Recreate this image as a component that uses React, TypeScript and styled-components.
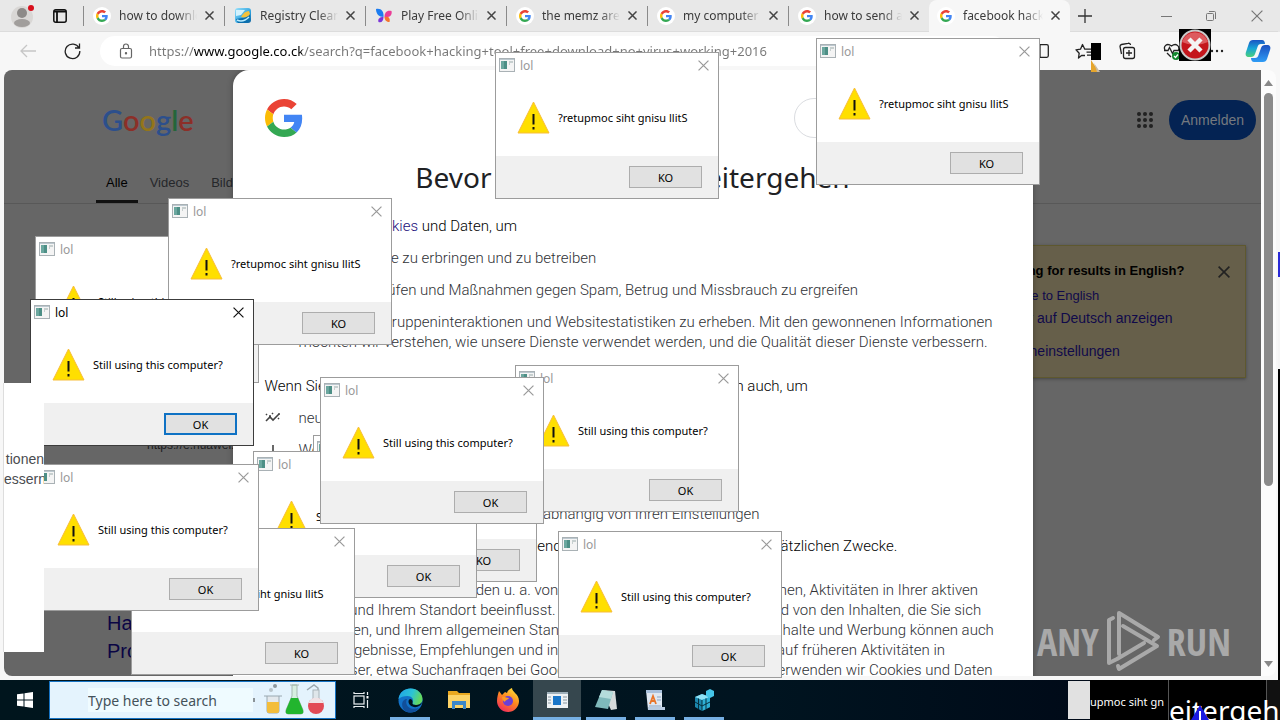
import React from "react";
import styled, { createGlobalStyle, css } from "styled-components";

const ui = `"Noto Sans", "Open Sans", sans-serif`;
const arial = `"Liberation Sans", Arial, sans-serif`;

const GlobalStyle = createGlobalStyle`
  *, *::before, *::after { box-sizing: border-box; }
  body { margin: 0; font-family: ${arial}; overflow: hidden; }
  button { border: 0; background: none; padding: 0; margin: 0; font: inherit; color: inherit; }
  a { text-decoration: none; color: inherit; }
  h1, h2, p, ul { margin: 0; padding: 0; }
  svg { display: block; flex: none; }
`;

const Desktop = styled.div`
  position: relative;
  display: flex;
  flex-direction: column;
  height: 100vh;
  overflow: hidden;
  background: #000;
`;
const Stage = styled.div`
  flex: 1;
  min-height: 0;
  display: flex;
`;
const EdgeStrip = styled.div`
  width: 2px;
  background: linear-gradient(#e8e8e8 0 32px, #f7f7f7 32px 252px, #2a2ad8 252px 277px, #f4f4f4 277px 369px, #000 369px);
`;
const Browser = styled.div`
  flex: 1;
  min-width: 0;
  display: flex;
  flex-direction: column;
  background: #f7f7f7;
`;

/* ---------- tab strip ---------- */
const TabStrip = styled.div`
  height: 32px;
  flex: none;
  display: flex;
  align-items: center;
  background: #e8e8e8;
  border-bottom: 1px solid #dcdcdc;
  font-family: ${ui};
  font-size: 12px;
  color: #3b3b3b;
`;
const ProfileArea = styled.div`
  width: 83px;
  flex: none;
  display: flex;
  align-items: center;
  gap: 17px;
  padding-left: 10px;
`;
const Tab = styled.div<{ $active?: boolean }>`
  width: 141px;
  min-width: 0;
  height: 32px;
  display: flex;
  align-items: center;
  gap: 8px;
  padding-right: 10px;
  ${(p) => p.$active ? css`
    padding-left: 8px;
    background: #f7f7f7;
    border-radius: 8px 8px 0 0;
  ` : css`
    padding-left: 10px;
    background: linear-gradient(#8a8a8a, #8a8a8a) 0 6px / 1px 20px no-repeat;
  `}
`;
const TabTitle = styled.span`
  flex: 1;
  min-width: 0;
  overflow: hidden;
  white-space: nowrap;
  line-height: 20px;
  mask-image: linear-gradient(90deg, #000 75%, transparent);
`;
const IconButton = styled.button<{ $lead?: number }>`
  display: grid;
  place-items: center;
  flex: none;
  margin-left: ${(p) => p.$lead ?? 0}px;
`;
const WindowControls = styled.div`
  margin-left: auto;
  display: flex;
  gap: 34px;
  padding-right: 15px;
`;

/* ---------- toolbar ---------- */
const Toolbar = styled.div`
  height: 38px;
  flex: none;
  display: flex;
  align-items: center;
  padding: 0 7px 0 18px;
`;
const AddressBar = styled.label`
  flex: 1;
  height: 30px;
  margin: 0 24px 0 19px;
  padding-left: 18px;
  display: flex;
  align-items: center;
  gap: 15px;
  border-radius: 15px;
  background: #fff;
`;
const AddressInput = styled.input`
  flex: 1;
  border: 0;
  padding: 0;
  outline: 0;
  font-family: ${ui};
  font-size: 13px;
  line-height: 20px;
  color: transparent;
  background: linear-gradient(90deg, #777 0 45px, #000 45px 153px, #777 153px);
  background-clip: text;
`;
const ToolbarIcons = styled.div`
  display: flex;
  align-items: center;
  gap: 20px;
`;

/* ---------- page ---------- */
const Frame = styled.div`
  flex: 1;
  min-height: 0;
  display: flex;
  margin: 0 2px 0 4px;
  padding-bottom: 4px;
`;
const Page = styled.main`
  position: relative;
  flex: 1;
  min-width: 0;
  overflow: hidden;
  border-radius: 8px 0 0 8px;
  background: #666;
  color: #1c1d1f;
`;
const ScrollBar = styled.div`
  width: 15px;
  display: flex;
  flex-direction: column;
  align-items: center;
  justify-content: space-between;
  padding: 10px 0 9px;
  background: #fcfcfc;
  border-radius: 0 8px 8px 0;
`;
const ScrollTrack = styled.div`
  flex: 1;
  margin: 7px 0;
`;
const ScrollThumb = styled.div`
  width: 9px;
  height: 70%;
  border-radius: 5px;
  background: #8b8b8b;
`;
const PageHeader = styled.header`
  display: flex;
  align-items: center;
  height: 100px;
  padding: 0 5px 0 98px;
`;
const Wordmark = styled.div`
  flex: 1;
  font-family: Lato, sans-serif;
  font-size: 29px;
  line-height: 38px;
  font-weight: 600;
`;
const Letter = styled.span<{ $c: string }>`
  color: ${(p) => p.$c};
`;
const SignIn = styled.button`
  width: 87px;
  height: 40px;
  margin-left: 16px;
  border-radius: 20px;
  background: #042353;
  color: #75797f;
  font-size: 14px;
`;
const PageTabs = styled.nav`
  display: flex;
  height: 34px;
  padding-left: 92px;
  gap: 2px;
  border-bottom: 1px solid #585858;
  font-size: 13px;
  line-height: 25px;
`;
const PageTab = styled.a<{ $on?: boolean }>`
  padding: 0 10px;
  color: ${(p) => (p.$on ? "#000" : "#25272a")};
  border-bottom: 3px solid ${(p) => (p.$on ? "#111" : "transparent")};
`;
const Columns = styled.div`
  display: flex;
  justify-content: space-between;
  padding: 41px 15px 0 103px;
`;
const Results = styled.div`
  width: 400px;
  padding-top: 190px;
`;
const ResultUrl = styled.p`
  padding-left: 40px;
  font-size: 12px;
  line-height: 20px;
`;
const ResultTitle = styled.a`
  display: block;
  margin-top: 154px;
  font-size: 20px;
  line-height: 28px;
  color: #0a0544;
`;
const LanguageCard = styled.aside`
  width: 277px;
  height: 133px;
  padding: 14px 15px 0 23px;
  display: grid;
  grid-template-columns: 1fr auto;
  align-content: start;
  background: #665f4a;
  border: 1px solid #5e582f;
  box-shadow: 0 1px 3px #444;
  font-size: 14px;
  line-height: 23px;
  color: #100a4a;
`;
const CardTitle = styled.h2`
  margin-bottom: 2px;
  font-size: 13px;
  line-height: 22px;
  color: #000;
`;
const CardLink = styled.a<{ $gap?: boolean; $small?: boolean }>`
  grid-column: 1 / -1;
  margin-top: ${(p) => (p.$gap ? 10 : 0)}px;
  font-size: ${(p) => (p.$small ? 13 : 14)}px;
`;

/* ---------- consent sheet ---------- */
const Consent = styled.section`
  position: absolute;
  inset: 0 0 auto 0;
  margin: 0 auto;
  width: 800px;
  height: 700px;
  padding: 28px 32px 0;
  border-radius: 16px 16px 0 0;
  background: #fff;
  font-family: Roboto, ${arial};
  font-size: 15px;
  font-weight: 300;
  line-height: 20px;
  color: #303236;
  white-space: nowrap;
  box-shadow: 0 0 6px rgba(0, 0, 0, 0.3);
`;
const ConsentTop = styled.div`
  display: flex;
  justify-content: space-between;
  align-items: center;
  height: 40px;
`;
const LanguageButton = styled.button`
  width: 207px;
  height: 40px;
  border: 1px solid #dadce0;
  border-radius: 20px;
`;
const ConsentTitle = styled.h1`
  margin: 20px 0;
  text-align: center;
  font-family: ${ui};
  font-size: 28px;
  line-height: 38px;
  font-weight: 400;
  color: #202124;
`;
const Lead = styled.p`
  color: #000;
`;
const Inline = styled.a`
  color: #1a0d7a;
`;
const Purposes = styled.ul<{ $tight?: boolean }>`
  list-style: none;
  margin: 12px 0 ${(p) => (p.$tight ? 12 : 24)}px;
  display: grid;
  gap: 12px;
`;
const Purpose = styled.li`
  display: grid;
  grid-template-columns: 16px 1fr;
  gap: 18px;
`;
const Fine = styled.p`
  margin-top: 24px;
`;
const Watermark = styled.div`
  position: absolute;
  right: 30px;
  bottom: 4px;
  display: flex;
  align-items: center;
  gap: 6px;
  font-family: "Liberation Sans Narrow", "Open Sans Condensed", "DejaVu Sans Condensed", sans-serif;
  font-size: 38px;
  line-height: 60px;
  color: #a9a9a9;
`;

/* ---------- message boxes ---------- */
const Box = styled.div<{ $x: number; $y: number; $active?: boolean }>`
  position: absolute;
  left: ${(p) => p.$x}px;
  top: ${(p) => p.$y}px;
  width: 224px;
  height: 147px;
  display: flex;
  flex-direction: column;
  border: 1px solid ${(p) => (p.$active ? "#3c3c3c" : "#9c9c9c")};
  background: #fff;
  font-family: ${ui};
  font-size: 11px;
  color: #000;
`;
const BoxTitle = styled.div<{ $active?: boolean }>`
  display: flex;
  align-items: center;
  gap: 5px;
  height: 24px;
  padding: 0 9px 0 3px;
  font-size: 12px;
  color: ${(p) => (p.$active ? "#000" : "#999")};
  ${IconButton} { margin-left: auto; }
`;
const BoxBody = styled.div`
  flex: 1;
  display: flex;
  align-items: center;
  gap: 8px;
  padding: 2px 0 0 21px;
  white-space: nowrap;
`;
const BoxFooter = styled.div`
  height: 42px;
  display: flex;
  justify-content: flex-end;
  padding: 10px 16px;
  background: #f0f0f0;
`;
const BoxButton = styled.button<{ $active?: boolean }>`
  width: 73px;
  height: 22px;
  background: #e1e1e1;
  border: ${(p) => (p.$active ? "2px solid #0f72c4" : "1px solid #adadad")};
`;

/* ---------- stray screen fragments ---------- */
const LeftFragment = styled.div`
  position: absolute;
  left: 3px;
  top: 383px;
  width: 41px;
  height: 269px;
  padding-top: 66px;
  overflow: hidden;
  background: #fff;
  border-left: 1px solid #ddd;
  font-size: 14px;
  line-height: 20px;
  color: #4a4c50;
  text-align: right;
`;
const StarFragment = styled.div`
  position: absolute;
  left: 1091px;
  top: 43px;
`;
const ErrorBadge = styled.div`
  position: absolute;
  left: 1179px;
  top: 29px;
`;

/* ---------- taskbar ---------- */
const Taskbar = styled.footer`
  position: relative;
  height: 40px;
  flex: none;
  display: flex;
  align-items: stretch;
  background: linear-gradient(90deg, #00151d, #001420 60%, #000a18 85%, #000);
`;
const StartButton = styled.button`
  width: 49px;
  display: grid;
  place-items: center;
`;
const SearchBox = styled.label`
  width: 287px;
  margin: 1px 0;
  padding: 0 8px 0 38px;
  display: flex;
  align-items: center;
  border: 1px solid #1673c4;
  background: #e4f3fd;
`;
const SearchInput = styled.input`
  flex: 1;
  min-width: 0;
  height: 24px;
  border: 0;
  padding: 0;
  background: #effbff;
  font-family: ${ui};
  font-size: 14px;
  &::placeholder { color: #44525a; opacity: 1; }
`;
const TaskButtons = styled.div`
  display: flex;
  gap: 1px;
  margin-left: 1px;
`;
const TaskButton = styled.button<{ $open?: boolean; $active?: boolean }>`
  width: 48px;
  display: grid;
  place-items: center;
  background: ${(p) => (p.$active ? "#36474e" : "none")};
  box-shadow: ${(p) => (p.$open ? "inset 0 -3px 0 #76b0e4" : "none")};
  border: solid transparent;
  border-width: 0 ${(p) => (p.$active ? 0 : 4)}px;
`;
const TrayFragments = styled.div`
  margin-left: auto;
  display: flex;
  font-family: ${ui};
  color: #fff;
  white-space: nowrap;
`;
const TrayBlank = styled.div`
  width: 22px;
  margin: 1px 0;
  background: #e1e1e1;
`;
const TrayText = styled.div`
  width: 79px;
  overflow: hidden;
  background: #000;
  border-right: 1px solid #555;
  font-size: 11px;
  line-height: 44px;
`;
const TrayHeading = styled.div`
  position: relative;
  width: 111px;
  overflow: hidden;
  background: linear-gradient(90deg, #000 97px, #555 97px 98px, #111 98px);
  font-size: 28px;
  line-height: 60px;
  svg { position: absolute; left: 21px; top: 25px; }
`;

/* ---------- icons ---------- */
const GIcon = ({ size }: { size: number }) => (
  <svg width={size} height={size} viewBox="0 0 48 48">
    <path fill="#EA4335" d="M24 9.5c3.54 0 6.71 1.22 9.21 3.6l6.85-6.85C35.9 2.38 30.47 0 24 0 14.62 0 6.51 5.38 2.56 13.22l7.98 6.19C12.43 13.72 17.74 9.5 24 9.5z" />
    <path fill="#4285F4" d="M46.98 24.55c0-1.57-.15-3.09-.38-4.55H24v9.02h12.94c-.58 2.96-2.26 5.48-4.78 7.18l7.73 6c4.51-4.18 7.09-10.36 7.09-17.65z" />
    <path fill="#FBBC05" d="M10.53 28.59c-.48-1.45-.76-2.99-.76-4.59s.27-3.14.76-4.59l-7.98-6.19C.92 16.46 0 20.12 0 24c0 3.88.92 7.54 2.56 10.78l7.97-6.19z" />
    <path fill="#34A853" d="M24 48c6.48 0 11.93-2.13 15.89-5.81l-7.73-6c-2.15 1.45-4.92 2.3-8.16 2.3-6.26 0-11.57-4.22-13.47-9.91l-7.98 6.19C6.51 42.62 14.62 48 24 48z" />
  </svg>
);
const GTabIcon = () => (
  <svg width="18" height="18" viewBox="0 0 18 18">
    <circle cx="9" cy="9" r="9" fill="#fff" />
    <svg x="3" y="3" width="12" height="12"><GIcon size={12} /></svg>
  </svg>
);
const RegistryIcon = () => (
  <svg width="18" height="18" viewBox="0 0 18 18">
    <defs>
      <linearGradient id="reg" x1="0" y1="0" x2="1" y2="1"><stop offset="0" stopColor="#9be2fb" /><stop offset=".6" stopColor="#2fa3df" /><stop offset="1" stopColor="#0a5f9c" /></linearGradient>
    </defs>
    <rect x="1" y="1" width="16" height="15" rx="3" fill="url(#reg)" />
    <path d="M2 12c4-1 8 0 14-5v7l-3 2H4z" fill="#0b6fae" />
    <path d="M2 3h9L7 8 2 9z" fill="#d2f2fe" />
    <path d="M7 10c2-4 5-6 8-6l1 3c-2 3-5 4-9 3z" fill="#f4c13c" />
    <path d="M3 13c4 2 8 1 12-3" stroke="#b8ecff" strokeWidth="1.500" fill="none" />
  </svg>
);
const ButterflyIcon = () => (
  <svg width="18" height="18" viewBox="0 0 18 18">
    <path d="M8.500 10C4 10 1 7 1 2c5-1 8 2 7.500 8z" fill="#1c7cf0" />
    <path d="M9.500 10c0-4 2-7 7-6 1 4-2 7-7 6z" fill="#ea3d96" />
    <path d="M8.500 10c-4 0-6 2-5 5 3 1 5-1 5-5z" fill="#7b35d8" />
    <path d="M9.500 10c4-1 6 1 5 5-3 0-5-2-5-5z" fill="#f5742c" />
  </svg>
);
const Cross = ({ size = 10, color = "#444", w = 1.5 }: { size?: number; color?: string; w?: number }) => (
  <svg width={size} height={size} viewBox="0 0 10 10" stroke={color} strokeWidth={(w * 10) / size} fill="none">
    <path d="M.5.5l9 9M9.500.5l-9 9" />
  </svg>
);
const AppIcon = () => (
  <svg width="16" height="14" viewBox="0 0 16 14">
    <rect x=".5" y=".5" width="15" height="13" fill="#f4f4f4" stroke="#a9b1b5" />
    <path d="M1 1.500h14" stroke="#bcc8cf" />
    <rect x="2" y="3" width="6" height="8" fill="#4d8f86" />
    <path d="M2 3h3v8H2z" fill="#6ba79f" />
    <path d="M10 4h2M10 6h1M13 3v2" stroke="#9aa" />
  </svg>
);
const WarningIcon = () => (
  <svg width="33" height="33" viewBox="0 0 33 33">
    <path d="M16.500 1L32 32H1z" fill="#ffdf00" stroke="#f7bd3a" strokeLinejoin="round" />
    <path d="M15.500 13h2v10.500h-2zM15.500 26h2v2.500h-2z" fill="#111" />
  </svg>
);

/* ---------- composed parts ---------- */
type BoxProps = { x: number; y: number; mirrored?: boolean; active?: boolean };
const MessageBox = ({ x, y, mirrored, active }: BoxProps) => (
  <Box $x={x} $y={y} $active={active} role="dialog" aria-label="lol">
    <BoxTitle $active={active}>
      <AppIcon />
      lol
      <IconButton aria-label="Close">
        <Cross size={11} color={active ? "#111" : "#999"} w={1.2} />
      </IconButton>
    </BoxTitle>
    <BoxBody>
      <WarningIcon />
      <span>{mirrored ? "?retupmoc siht gnisu llitS" : "Still using this computer?"}</span>
    </BoxBody>
    <BoxFooter>
      <BoxButton $active={active}>{mirrored ? "KO" : "OK"}</BoxButton>
    </BoxFooter>
  </Box>
);

const tabs = [
  { title: "how to download", icon: <GTabIcon /> },
  { title: "Registry Cleaner", icon: <RegistryIcon /> },
  { title: "Play Free Online", icon: <ButterflyIcon /> },
  { title: "the memz are real", icon: <GTabIcon /> },
  { title: "my computer is", icon: <GTabIcon /> },
  { title: "how to send a virus", icon: <GTabIcon /> },
  { title: "facebook hacking", icon: <GTabIcon />, active: true },
];

const boxes: BoxProps[] = [
  { x: 313, y: 435, mirrored: true },
  { x: 515, y: 365 },
  { x: 253, y: 451 },
  { x: 320, y: 377 },
  { x: 131, y: 528, mirrored: true },
  { x: 35, y: 464 },
  { x: 35, y: 236 },
  { x: 168, y: 198, mirrored: true },
  { x: 495, y: 52, mirrored: true },
  { x: 816, y: 38, mirrored: true },
  { x: 558, y: 531 },
  { x: 30, y: 299, active: true },
];

const ink = { fill: "none", stroke: "#222", strokeWidth: 1.3 };

const PurposeIcon = ({ d }: { d: string }) => (
  <svg width="16" height="20" viewBox="0 0 16 20" fill="none" stroke="#444" strokeWidth="1.6"><path d={d} /></svg>
);

export default function App() {
  return (
    <Desktop>
      <GlobalStyle />
      <Stage>
        <Browser>
          <TabStrip>
            <ProfileArea>
              <svg width="26" height="26" viewBox="0 0 26 26">
                <circle cx="12" cy="14" r="11" fill="#d9d7d5" />
                <circle cx="12" cy="10" r="5" fill="#8d8a88" />
                <ellipse cx="12" cy="20" rx="8" ry="4" fill="#a19e9c" />
                <circle cx="21" cy="5" r="3" fill="#d80f1c" />
              </svg>
              <svg width="14" height="14" viewBox="0 0 14 14">
                <rect x=".8" y=".8" width="12.4" height="12.4" rx="2" fill="none" stroke="#111" strokeWidth="1.5" />
                <path d="M1 2.500h12M4 3v10" stroke="#111" strokeWidth="1.800" />
              </svg>
            </ProfileArea>
            {tabs.map((t) => (
              <Tab key={t.title} $active={t.active}>
                {t.icon}
                <TabTitle>{t.title}</TabTitle>
                <IconButton aria-label="Close tab"><Cross size={9} /></IconButton>
              </Tab>
            ))}
            <IconButton aria-label="New tab" $lead={8}>
              <svg width="14" height="14" viewBox="0 0 14 14" stroke="#333" strokeWidth="1.3"><path d="M7 0v14M0 7h14" /></svg>
            </IconButton>
            <WindowControls>
              <IconButton aria-label="Minimize">
                <svg width="11" height="12" stroke="#777"><path d="M0 6.500h11" /></svg>
              </IconButton>
              <IconButton aria-label="Restore">
                <svg width="11" height="12" viewBox="0 0 11 12" fill="none" stroke="#777">
                  <rect x=".5" y="3.500" width="7" height="7" rx="1" /><path d="M3 1.500h5.500a1 1 0 0 1 1 1V9" />
                </svg>
              </IconButton>
              <IconButton aria-label="Close window"><Cross size={12} color="#777" w={1.2} /></IconButton>
            </WindowControls>
          </TabStrip>

          <Toolbar>
            <IconButton aria-label="Back">
              <svg width="20" height="16" viewBox="0 0 20 16" fill="none" stroke="#c6c6c6" strokeWidth="1.3"><path d="M18 8H3M9 2L3 8l6 6" /></svg>
            </IconButton>
            <IconButton aria-label="Reload" $lead={26}>
              <svg width="17" height="18" viewBox="0 0 17 18" {...ink}><path d="M15 6A7.300 7.300 0 1 0 15.800 9M15.500 1.500V6H11" /></svg>
            </IconButton>
            <AddressBar>
              <svg width="16" height="16" viewBox="0 0 16 16" fill="none" stroke="#666" strokeWidth="1.2">
                <rect x="2.500" y="5.500" width="11" height="9.500" rx="1.500" />
                <path d="M5.500 5.500V3.500a2.500 2.500 0 0 1 5 0v2" /><circle cx="8" cy="10.200" r=".6" fill="#666" />
              </svg>
              <AddressInput
                aria-label="Address"
                defaultValue="https://www.google.co.ck/search?q=facebook+hacking+tool+free+download+no+virus+working+2016"
              />
            </AddressBar>
            <ToolbarIcons>
              <IconButton aria-label="Split screen">
                <svg width="18" height="14" viewBox="0 0 18 14" {...ink}><rect x=".7" y=".7" width="16.600" height="12.600" rx="1.500" /><path d="M9 1v12" /></svg>
              </IconButton>
              <IconButton aria-label="Favorites" $lead={6}>
                <svg width="20" height="18" viewBox="0 0 20 18" {...ink}>
                  <path d="M10 13.500L6.500 13.500 3.500 16l.7-4.800L1 7.800l4.500-.6L7.500 2.500l2.300 4.700H17M11.500 10.200H17M12 13.200h5" strokeLinejoin="round" />
                </svg>
              </IconButton>
              <IconButton aria-label="Collections" $lead={3}>
                <svg width="18" height="18" viewBox="0 0 18 18" {...ink}>
                  <rect x="5.500" y="5.500" width="11" height="11" rx="2" /><path d="M11 8v6M8 11h6M3.500 12L2 4.500A2 2 0 0 1 3.500 2.500L10 1.300A2 2 0 0 1 12.500 3" />
                </svg>
              </IconButton>
              <IconButton aria-label="Browser essentials" $lead={7}>
                <svg width="18" height="18" viewBox="0 0 18 18" {...ink}>
                  <path d="M2 8C0 4 4 .5 8.500 4 13 .5 17 4 15.500 8M1 8.500h4l1.500-3 3 6L11 8.500h5M4 11l4 4" />
                  <circle cx="13" cy="14" r="4" fill="#12862d" stroke="none" /><path d="M11 14l1.500 1.500L15 12.500" stroke="#fff" />
                </svg>
              </IconButton>
              <IconButton aria-label="Settings and more" $lead={8}>
                <svg width="16" height="4" viewBox="0 0 16 4" fill="#222"><circle cx="3" cy="2" r="1.200" /><circle cx="8" cy="2" r="1.200" /><circle cx="13" cy="2" r="1.200" /></svg>
              </IconButton>
              <IconButton aria-label="Copilot">
                <svg width="26" height="24" viewBox="0 0 26 24">
                  <defs>
                    <linearGradient id="cpA" x1="0" y1="0" x2="0" y2="1"><stop offset="0" stopColor="#1a55c4" /><stop offset=".5" stopColor="#18a5d6" /><stop offset="1" stopColor="#4bd07c" /></linearGradient>
                    <linearGradient id="cpB" x1="0" y1="0" x2="0" y2="1"><stop offset="0" stopColor="#1b50c0" /><stop offset="1" stopColor="#2f9cf5" /></linearGradient>
                  </defs>
                  <path d="M8 1h9c2 0 3 2 3 4h-4c-2 0-3 1-3.500 3L10 15c-.6 2-2 3-4 3H4c-3 0-4-2-3-5L4 4c.6-2 2-3 4-3z" fill="url(#cpA)" />
                  <path d="M18 23H9c-2 0-3-2-3-4h4c2 0 3-1 3.500-3L16 9c.6-2 2-3 4-3h2c3 0 4 2 3 5l-3 9c-.6 2-2 3-4 3z" fill="url(#cpB)" />
                </svg>
              </IconButton>
            </ToolbarIcons>
          </Toolbar>

          <Frame>
            <Page>
              <PageHeader>
                <Wordmark aria-label="Google">
                  <Letter $c="#2c4f8c">G</Letter><Letter $c="#8c2f28">o</Letter><Letter $c="#94751a">o</Letter>
                  <Letter $c="#2c4f8c">g</Letter><Letter $c="#24663a">l</Letter><Letter $c="#8c2f28">e</Letter>
                </Wordmark>
                <IconButton aria-label="Google apps">
                  <svg width="16" height="16" viewBox="0 0 16 16" fill="#222">
                    {[2, 8, 14].map((cy) => [2, 8, 14].map((cx) => <circle key={`${cx}-${cy}`} cx={cx} cy={cy} r="2" />))}
                  </svg>
                </IconButton>
                <SignIn>Anmelden</SignIn>
              </PageHeader>
              <PageTabs>
                <PageTab href="#alle" $on>Alle</PageTab>
                <PageTab href="#videos">Videos</PageTab>
                <PageTab href="#bilder">Bilder</PageTab>
              </PageTabs>
              <Columns>
                <Results>
                  <ResultUrl>https://e.huawei.com</ResultUrl>
                  <ResultTitle href="#result">Hacking Tools<br />Programme</ResultTitle>
                </Results>
                <LanguageCard>
                  <CardTitle>Looking for results in English?</CardTitle>
                  <IconButton aria-label="Dismiss"><Cross size={12} color="#222" w={1.6} /></IconButton>
                  <CardLink href="#en" $small>Change to English</CardLink>
                  <CardLink href="#de">Weiter auf Deutsch anzeigen</CardLink>
                  <CardLink href="#lang" $gap>Spracheinstellungen</CardLink>
                </LanguageCard>
              </Columns>

              <Consent>
                <ConsentTop>
                  <GIcon size={38} />
                  <LanguageButton aria-label="Language" />
                </ConsentTop>
                <ConsentTitle>Bevor Sie zu Google weitergehen</ConsentTitle>
                <Lead>Wir verwenden <Inline href="#cookies">Cookies</Inline> und Daten, um</Lead>
                <Purposes>
                  <Purpose><span /><span>Google-Dienste zu erbringen und zu betreiben</span></Purpose>
                  <Purpose><span /><span>Ausfälle zu prüfen und Maßnahmen gegen Spam, Betrug und Missbrauch zu ergreifen</span></Purpose>
                  <Purpose>
                    <span />
                    <span>
                      Daten zu Zielgruppeninteraktionen und Websitestatistiken zu erheben. Mit den gewonnenen Informationen<br />
                      möchten wir verstehen, wie unsere Dienste verwendet werden, und die Qualität dieser Dienste verbessern.
                    </span>
                  </Purpose>
                </Purposes>
                <Lead>Wenn Sie „Alle akzeptieren“ auswählen, verwenden wir Cookies und Daten auch, um</Lead>
                <Purposes $tight>
                  <Purpose><PurposeIcon d="M1 13l4-4 3 3 6-6M1 7l1-1M7 5l1 1M13 11l1-1M4 8h2M13 6h2" /><span>neue Dienste zu entwickeln und zu verbessern</span></Purpose>
                  <Purpose><PurposeIcon d="M3 16v-5M8 16V5M13 16v-3" /><span>Werbung auszuliefern und ihre Wirkung zu messen</span></Purpose>
                  <Purpose><span /><span>personalisierte Inhalte anzuzeigen, je nach Ihren Einstellungen</span></Purpose>
                  <Purpose><span /><span>personalisierte Werbung anzuzeigen, abhängig von Ihren Einstellungen</span></Purpose>
                </Purposes>
                <Lead>Wenn Sie „Alle ablehnen“ auswählen, verwenden wir Cookies nicht für diese zusätzlichen Zwecke.</Lead>
                <Fine>
                  Nicht personalisierte Inhalte werden u. a. von Inhalten, die Sie sich gerade ansehen, Aktivitäten in Ihrer aktiven<br />
                  Suchsitzung und Ihrem Standort beeinflusst. Nicht personalisierte Werbung wird von den Inhalten, die Sie sich<br />
                  gerade ansehen, und Ihrem allgemeinen Standort beeinflusst. Personalisierte Inhalte und Werbung können auch<br />
                  relevantere Ergebnisse, Empfehlungen und individuelle Werbung enthalten, die auf früheren Aktivitäten in<br />
                  diesem Browser, etwa Suchanfragen bei Google, basieren können. Außerdem verwenden wir Cookies und Daten
                </Fine>
              </Consent>

              <Watermark>
                ANY
                <svg width="56" height="62" viewBox="0 0 56 62" fill="none" stroke="#a9a9a9" strokeWidth="4" strokeLinejoin="round" strokeLinecap="round">
                  <path d="M14 44V3l39 24-4 3M18 16l34 20L14 59l-1-3M8 8L4 10v43l8-4 27-16" />
                </svg>
                RUN
              </Watermark>
            </Page>
            <ScrollBar>
              <svg width="9" height="6" viewBox="0 0 9 6"><path d="M0 6l4.500-6L9 6z" fill="#888" /></svg>
              <ScrollTrack><ScrollThumb /></ScrollTrack>
              <svg width="9" height="6" viewBox="0 0 9 6"><path d="M0 0l4.500 6L9 0z" fill="#888" /></svg>
            </ScrollBar>
          </Frame>
        </Browser>
        <EdgeStrip />
      </Stage>

      <Taskbar>
        <StartButton aria-label="Start">
          <svg width="16" height="16" viewBox="0 0 16 16" fill="#fff">
            <path d="M0 2.300L6.500 1.400V7.500H0zM7.500 1.200L16 0v7.500H7.500zM0 8.500h6.500v6.100L0 13.700zM7.500 8.500H16V16l-8.500-1.200z" />
          </svg>
        </StartButton>
        <SearchBox>
          <SearchInput aria-label="Search" placeholder="Type here to search" />
          <svg width="74" height="34" viewBox="0 0 74 34">
            <path d="M1 15v4" stroke="#333" />
            <path d="M11 13h18M14 13v15a2 2 0 0 0 2 2h8a2 2 0 0 0 2-2V13" fill="#e3e8ec" stroke="#9aa8b0" />
            <path d="M14 19h12v9a2 2 0 0 1-2 2h-8a2 2 0 0 1-2-2z" fill="#f3bd3a" />
            <circle cx="18" cy="7" r="2" fill="#b9c4ca" /><circle cx="22" cy="3" r="2" fill="#8d999f" />
            <path d="M37 2h9M39 2v11l-6 14q-1 4 2 4h13q3 0 2-4l-6-14V2z" fill="#d7efe0" stroke="#a5b8ae" />
            <path d="M38 15h7l5 12q1 4-2 4H35q-3 0-2-4z" fill="#22b52e" />
            <path d="M54 7l7-5 4 3v14" stroke="#9aa8b0" fill="none" strokeWidth="1.500" />
            <rect x="60" y="7" width="6" height="12" fill="#dfe6ea" stroke="#a9b4ba" />
            <circle cx="63" cy="23" r="8" fill="#e24a55" /><path d="M55.500 20a8 8 0 0 1 15 0z" fill="#efe3e6" />
          </svg>
        </SearchBox>
        <TaskButtons>
          <TaskButton aria-label="Task view">
            <svg width="17" height="16" viewBox="0 0 17 16" fill="none" stroke="#e8eef0" strokeWidth="1.200">
              <rect x="1" y="4" width="10" height="8" /><path d="M1 0v1.500h10V0M1 16v-1.500h10V16M14.500 0v3M14.500 8v8" /><path d="M13.500 4h2v2.500h-2z" fill="#fff" stroke="none" />
            </svg>
          </TaskButton>
          <TaskButton aria-label="Edge" $open>
            <svg width="25" height="25" viewBox="0 0 25 25">
              <defs>
                <linearGradient id="edge" x1="0" y1="0" x2="1" y2=".3"><stop offset="0" stopColor="#1fa2e8" /><stop offset=".6" stopColor="#2cc3d5" /><stop offset="1" stopColor="#63d860" /></linearGradient>
              </defs>
              <circle cx="12.500" cy="12.500" r="12" fill="#1272c8" />
              <path d="M.5 11C1.500 4 6.500.5 12.500.5c7 0 12 5 12 10.500 0 4-3 6-6.500 6-2.500 0-4-1-3.500-2 2-4-1-7-5-7-4 0-7 1-9 3z" fill="url(#edge)" />
              <path d="M9 11c-3 6 3 12 12 9-3 4-8 5.500-12 4C2 21 3 11 9 11z" fill="#114f9a" />
              <path d="M14.500 15c-.5 1 1 2 3.500 2 2.500 0 5-1 6-3-1 5-8 7-12 3-2-2-2-5 0-6 2 0 3 2 2.500 4z" fill="#00151d" />
            </svg>
          </TaskButton>
          <TaskButton aria-label="File Explorer">
            <svg width="23" height="20" viewBox="0 0 23 20">
              <path d="M0 1h9l2 2h11v15H0z" fill="#e9a820" /><path d="M0 5h22v13H0z" fill="#fcd367" />
              <path d="M4 19v-8h14v8h-3v-4H7v4z" fill="#3c87c9" />
            </svg>
          </TaskButton>
          <TaskButton aria-label="Firefox">
            <svg width="24" height="24" viewBox="0 0 24 24">
              <defs>
                <linearGradient id="fx" x1=".8" y1="0" x2=".2" y2="1"><stop offset="0" stopColor="#ffe23a" /><stop offset=".45" stopColor="#ff8a1f" /><stop offset="1" stopColor="#f0265f" /></linearGradient>
              </defs>
              <path d="M3 3l3 4 3-3 2 1c1-3 3-4 5-5 0 4 7 6 7 13a11 11 0 0 1-22 0C1 9 2 6 3 3z" fill="url(#fx)" />
              <circle cx="12" cy="13" r="5" fill="#6b3fd6" /><path d="M6 9c3-1 4 1 7 1-1 2-4 2-4 4-2-1-3-3-3-5z" fill="#ff9a22" />
            </svg>
          </TaskButton>
          <TaskButton aria-label="lol" $open $active>
            <svg width="21" height="16" viewBox="0 0 21 16">
              <rect width="21" height="16" fill="#eef2f4" /><path d="M0 1h21" stroke="#9fb0ba" strokeWidth="2" />
              <rect x="6" y="4" width="8" height="9" fill="#1976c8" /><path d="M1 5h3M1 8h3M1 11h3M16 5h4M16 8h4M16 11h4" stroke="#8997a0" />
            </svg>
          </TaskButton>
          <TaskButton aria-label="Notepad" $open>
            <svg width="24" height="22" viewBox="0 0 24 22">
              <path d="M8 1l13 1 2 18-6 1z" fill="#d5dadb" /><path d="M8 1l11 2-5 17-13-2z" fill="#7fb9bb" /><path d="M8 1l11 2-2 7L5 8z" fill="#b4dcdb" />
            </svg>
          </TaskButton>
          <TaskButton aria-label="WordPad" $open>
            <svg width="20" height="22" viewBox="0 0 20 22">
              <path d="M1 1h16v20H3z" fill="#dfe8f2" /><path d="M1 1h16v3H1z" fill="#a8c0dc" /><path d="M5 15L8 7l3 8M6 12h4" stroke="#e8752a" strokeWidth="1.800" fill="none" />
              <path d="M12 8h4M12 11h4M4 17h12" stroke="#8ba5c3" /><path d="M3 18h17v3H3z" fill="#b8cbe0" />
            </svg>
          </TaskButton>
          <TaskButton aria-label="Registry Editor" $open>
            <svg width="22" height="24" viewBox="0 0 22 24">
              <path d="M2 9l7-3 8 3v10l-8 4-7-4z" fill="#1b87ad" /><path d="M2 9l7-3 8 3-8 3z" fill="#8fe1f5" /><path d="M9 12l8-3v10l-8 4z" fill="#2fb0d6" />
              <path d="M2 14l7 4 8-4M5.500 10.500V21M13 10.500V21M9 12v11" stroke="#06303f" fill="none" /><path d="M13 3l4-2 4 2v5l-4 2-4-2z" fill="#45c5e8" />
            </svg>
          </TaskButton>
        </TaskButtons>
        <TrayFragments>
          <TrayBlank />
          <TrayText>upmoc siht gn</TrayText>
          <TrayHeading>
            eitergehen
            <svg width="20" height="15" viewBox="0 0 20 15"><path d="M10 0l9 15H1z" fill="#1a1ae0" /><path d="M9 6h2v9H9z" fill="#fff" /></svg>
          </TrayHeading>
        </TrayFragments>
      </Taskbar>

      {boxes.map((b) => <MessageBox key={`${b.x}-${b.y}`} {...b} />)}

      <LeftFragment>tionen<br />essern</LeftFragment>
      <StarFragment>
        <svg width="10" height="29" viewBox="0 0 10 29">
          <path d="M0 0h10v17H0z" fill="#000" /><path d="M0 17l8 12H0z" fill="#e5a52c" /><path d="M3 20l6 9H6z" fill="#c9b9a0" />
        </svg>
      </StarFragment>
      <ErrorBadge>
        <svg width="32" height="32" viewBox="0 0 32 32">
          <path d="M0 0h32v32H0z" fill="#000" /><circle cx="16" cy="16" r="15.500" fill="#c9c9c9" /><circle cx="16" cy="16" r="13.500" fill="#c4161c" />
          <path d="M3 13a13.500 13.500 0 0 1 26 0q-13 6-26 0z" fill="#dd5a5e" /><path d="M10 10l12 12M22 10L10 22" stroke="#f4f4f4" strokeWidth="4.500" />
        </svg>
      </ErrorBadge>
    </Desktop>
  );
}
